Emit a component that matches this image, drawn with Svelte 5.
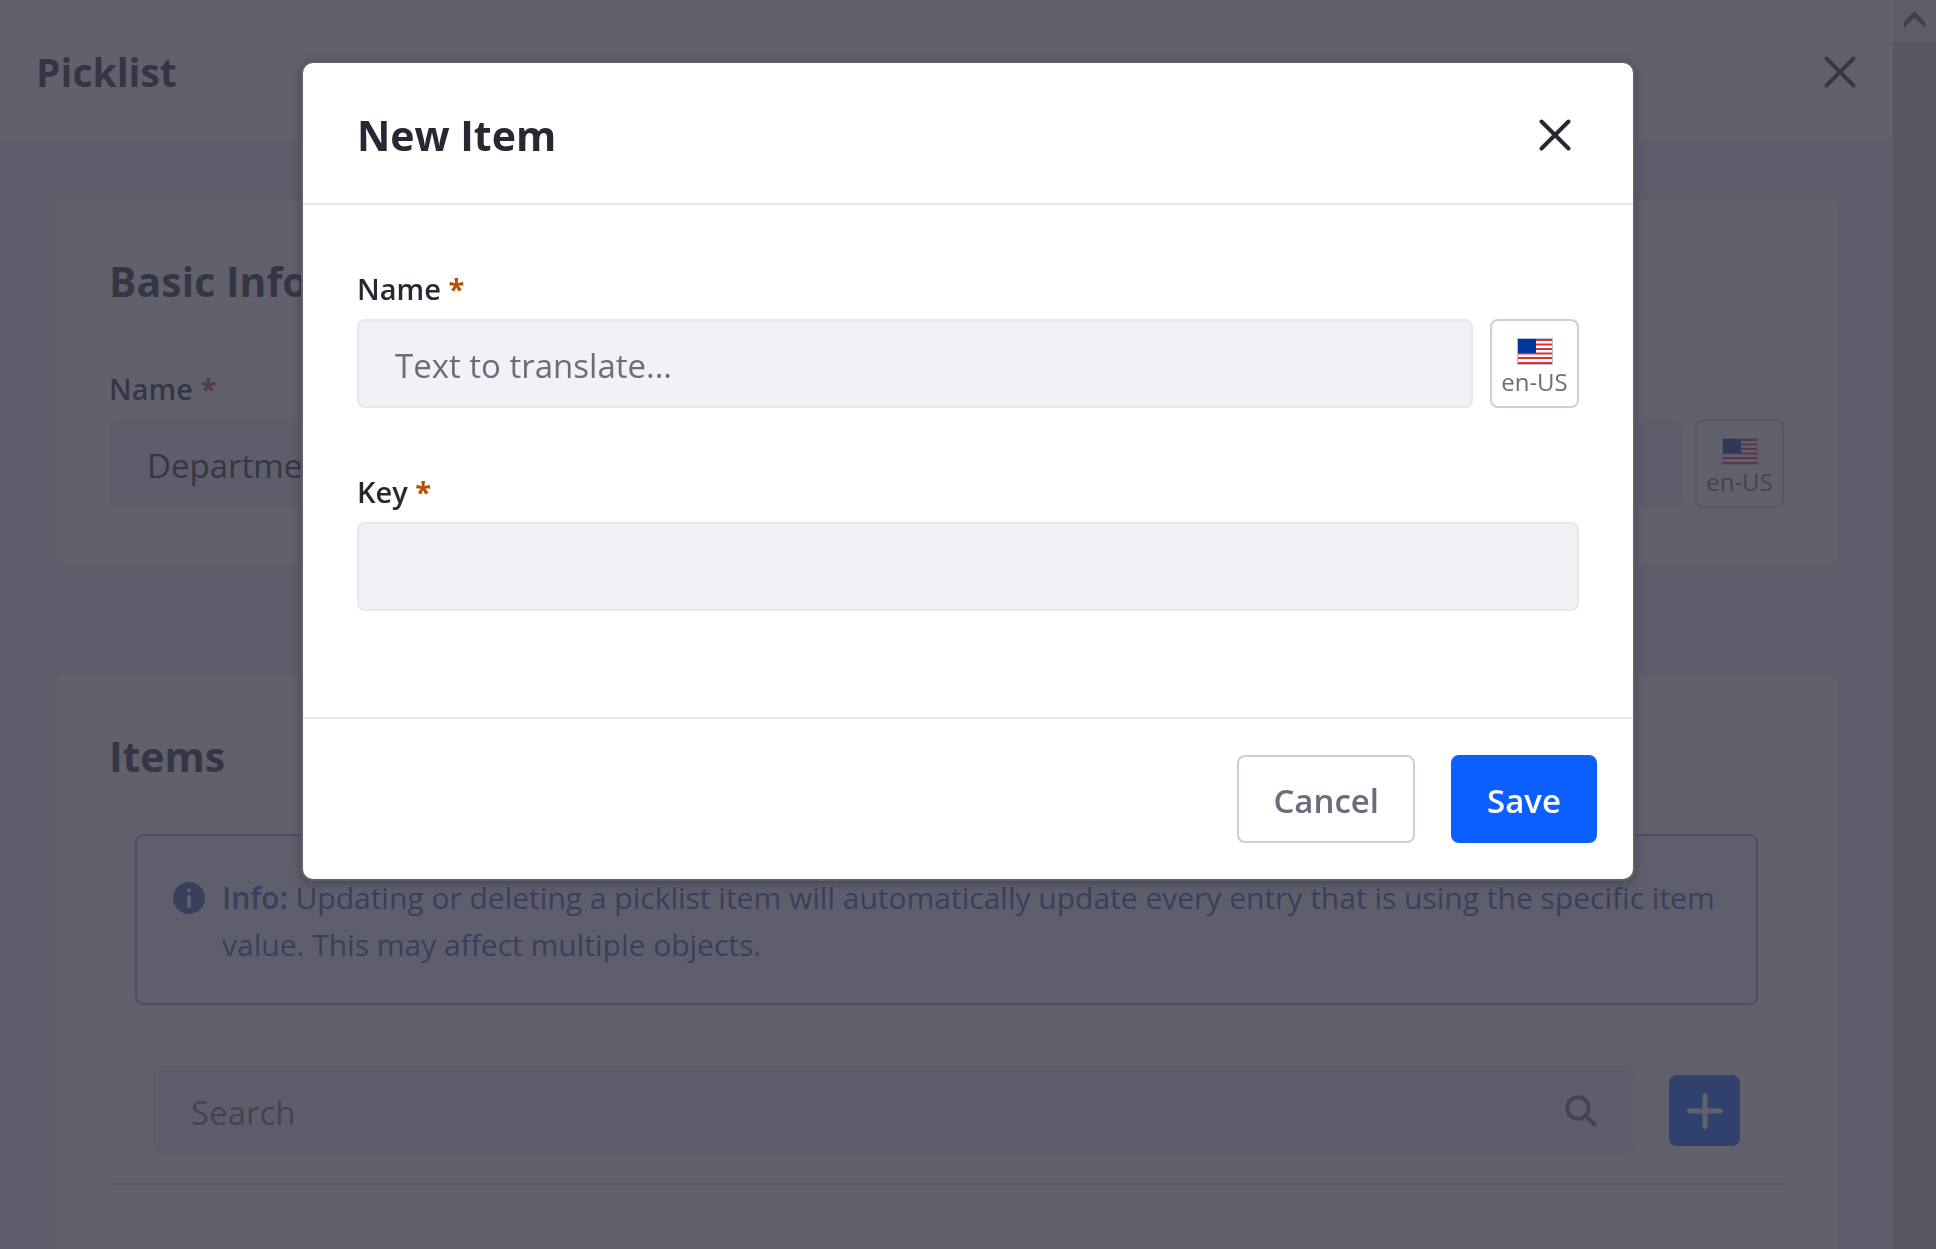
<script lang="ts">
  let name = $state('');
  let key = $state('');
  let picklistName = $state('Departments');
  let query = $state('');
</script>

{#snippet close()}
  <svg class="close-icon" viewBox="0 0 32 32" aria-hidden="true">
    <path d="M2.5 2.5 29.5 29.5M29.5 2.5 2.5 29.5" />
  </svg>
{/snippet}

{#snippet locale()}
  <button type="button" class="locale" aria-label="Language: en-US">
    <svg class="flag" viewBox="0 0 36 27" aria-hidden="true">
      <rect width="36" height="27" fill="#b9c3cf" />
      <rect x="1" y="1" width="34" height="25" fill="#fff" />
      <path
        d="M1 2h34M1 6.5h34M1 11h34M1 15.5h34M1 20h34M1 25h34"
        stroke="#e02f33"
        stroke-width="2"
      />
      <rect x="1" y="1" width="18" height="14" fill="#0035a0" />
    </svg>
    <span>en-US</span>
  </button>
{/snippet}

<div class="page">
  <main class="panel">
    <header class="panel-head">
      <h1>Picklist</h1>
      <button type="button" class="icon-button" aria-label="Close panel">{@render close()}</button>
    </header>

    <div class="cards">
      <section class="card">
        <h2>Basic Info</h2>
        <label for="picklist-name">Name <span class="req">*</span></label>
        <div class="row">
          <input id="picklist-name" type="text" bind:value={picklistName} />
          {@render locale()}
        </div>
      </section>

      <section class="card items">
        <h2>Items</h2>
        <div class="alert">
          <svg class="info-icon" viewBox="0 0 32 32" aria-hidden="true">
            <circle cx="16" cy="16" r="16" fill="#2e5aac" />
            <circle cx="16" cy="8" r="2" fill="#eef2fa" />
            <path d="M16 15v9" stroke="#eef2fa" stroke-width="4" stroke-linecap="round" />
          </svg>
          <p>
            <strong>Info:</strong> Updating or deleting a picklist item will automatically update every
            entry that is using the specific item value. This may affect multiple objects.
          </p>
        </div>
        <div class="toolbar">
          <div class="search">
            <input type="search" aria-label="Search" placeholder="Search" bind:value={query} />
            <svg viewBox="0 0 32 32" aria-hidden="true">
              <circle cx="13" cy="13" r="10.7" />
              <path d="m21 21 8.500 8.500" />
            </svg>
          </div>
          <button type="button" class="add" aria-label="Add item">
            <svg viewBox="0 0 36 36" aria-hidden="true"><path d="M18 2.500v31M2.500 18h31" /></svg>
          </button>
        </div>
      </section>
    </div>
  </main>

  <div class="scrollbar" aria-hidden="true">
    <div class="scroll-up">
      <svg viewBox="0 0 21 17"><path d="M0 10.500 10.500 0 21 10.500V17L10.500 7 0 17z" /></svg>
    </div>
  </div>
</div>

<div class="backdrop">
  <div class="modal" role="dialog" aria-modal="true" aria-labelledby="modal-title">
    <header class="modal-head">
      <h2 id="modal-title">New Item</h2>
      <button type="button" class="icon-button" aria-label="Close dialog">{@render close()}</button>
    </header>
    <form class="modal-body" id="item-form">
      <div class="field">
        <label for="item-name">Name <span class="req">*</span></label>
        <div class="row wide">
          <input id="item-name" type="text" placeholder="Text to translate..." bind:value={name} />
          {@render locale()}
        </div>
      </div>
      <div class="field">
        <label for="item-key">Key <span class="req">*</span></label>
        <input id="item-key" type="text" bind:value={key} />
      </div>
    </form>
    <footer class="modal-foot">
      <button type="button" class="btn secondary">Cancel</button>
      <button type="submit" form="item-form" class="btn primary">Save</button>
    </footer>
  </div>
</div>

<style>
  :global(body) {
    margin: 0;
    background: #f1ebf2;
    color: #272833;
    font-family: 'Open Sans', 'Noto Sans', sans-serif;
    font-size: 33px;
  }
  .page,
  .page *,
  .backdrop,
  .backdrop * {
    box-sizing: border-box;
  }
  h1,
  h2,
  p {
    margin: 0;
  }
  h1,
  h2 {
    font-size: 41px;
    line-height: 56px;
    font-weight: 700;
  }
  h1 {
    font-size: 39px;
  }
  button,
  input {
    font: inherit;
    color: inherit;
  }
  button {
    padding: 0;
    cursor: pointer;
  }

  .page {
    display: flex;
    height: 100vh;
    overflow: hidden;
  }
  .panel {
    flex: 1;
    min-width: 0;
    display: flex;
    flex-direction: column;
  }
  .panel-head {
    display: flex;
    flex: none;
    align-items: center;
    justify-content: space-between;
    padding: 44px 35px 40px 36px;
    background: #fff;
    border-bottom: 2px solid #e7e7ed;
  }
  .cards {
    flex: 1;
    display: flex;
    flex-direction: column;
    gap: 107px;
    padding: 56px 54px 0;
  }
  .card {
    padding: 53px 53px 56px;
    background: #fff;
    border: 2px solid #ede7ee;
    border-radius: 8px;
  }
  .items {
    flex: 1;
    padding-bottom: 0;
    border-bottom: 0;
    border-radius: 8px 8px 0 0;
  }
  .icon-button {
    display: grid;
    place-items: center;
    width: 36px;
    height: 36px;
    border: 0;
    background: none;
  }
  .close-icon {
    width: 32px;
    height: 32px;
    fill: none;
    stroke: currentColor;
    stroke-width: 4;
    stroke-linecap: round;
  }

  label {
    display: block;
    font-size: 29px;
    line-height: 44px;
    font-weight: 600;
    margin-bottom: 8px;
  }
  .card label {
    margin-top: 58px;
  }
  .req {
    color: #b95000;
    font-weight: 700;
  }
  .row {
    display: flex;
    gap: 13px;
  }
  .row.wide {
    gap: 17px;
  }
  input {
    flex: 1;
    display: block;
    width: 100%;
    min-width: 0;
    height: 89px;
    padding: 4px 36px 0;
    background: #f1f2f5;
    border: 2px solid #e7e7ed;
    border-radius: 8px;
    outline: 0;
  }
  .card input {
    background: #f1ebf2;
    border-color: #ede7ee;
  }
  input::placeholder {
    color: #6b6c7e;
    opacity: 1;
  }
  .locale {
    flex: none;
    width: 89px;
    height: 89px;
    display: flex;
    flex-direction: column;
    align-items: center;
    gap: 1px;
    padding-top: 17px;
    background: #fff;
    border: 2px solid #cdced9;
    border-radius: 8px;
    color: #6b6c7e;
    font-size: 24px;
    line-height: 32px;
  }
  .flag {
    flex: none;
    width: 36px;
    height: 27px;
  }

  .alert {
    display: flex;
    gap: 17px;
    margin: 50px 26px 0;
    padding: 38px 24px 35px 36px;
    background: #f4eef4;
    border: 2px solid #89a7e0;
    border-radius: 8px;
    color: #2e5aac;
    font-size: 30px;
    line-height: 47px;
  }
  .info-icon {
    flex: none;
    width: 32px;
    height: 32px;
    margin-top: 8px;
  }
  strong {
    font-weight: 600;
  }
  .toolbar {
    display: flex;
    align-items: center;
    gap: 36px;
    padding: 61px 44px 28px;
    border-bottom: 2px solid #e7e7ed;
  }
  .search {
    flex: 1;
    display: flex;
    align-items: center;
    padding-right: 34px;
    background: #f1ebf2;
    border: 2px solid #ede7ee;
    border-radius: 8px;
  }
  .search input {
    height: 85px;
    background: none;
    border: 0;
  }
  .search svg {
    flex: none;
    width: 32px;
    height: 32px;
    fill: none;
    stroke: #6b6c7e;
    stroke-width: 4;
    stroke-linecap: round;
  }
  .add {
    display: grid;
    place-items: center;
    width: 71px;
    height: 71px;
    background: #0b5fff;
    border: 0;
    border-radius: 8px;
  }
  .add svg {
    width: 36px;
    height: 36px;
    stroke: #fff;
    stroke-width: 5;
    stroke-linecap: round;
  }

  .scrollbar {
    width: 43px;
    background: #cdcdcd;
  }
  .scroll-up {
    display: grid;
    place-items: center;
    height: 42px;
    padding-bottom: 4px;
    background: #f0f0f0;
  }
  .scroll-up svg {
    width: 21px;
    height: 17px;
    fill: #606060;
  }

  .backdrop {
    position: fixed;
    inset: 0;
    padding: 63px 36px;
    background: rgba(57, 58, 74, 0.8);
  }
  .modal {
    max-width: 1330px;
    margin: 0 auto;
    background: #fff;
    border-radius: 10px;
    box-shadow:
      0 0 0 2px #60606c,
      0 2px 10px 2px rgba(39, 40, 51, 0.5);
  }
  .modal-head {
    display: flex;
    align-items: center;
    justify-content: space-between;
    padding: 44px 60px 40px 54px;
    border-bottom: 2px solid #e7e7ed;
  }
  .modal-body {
    display: flex;
    flex-direction: column;
    gap: 62px;
    padding: 62px 54px 106px;
  }
  .modal-foot {
    display: flex;
    justify-content: flex-end;
    gap: 36px;
    padding: 36px;
    border-top: 2px solid #e7e7ed;
  }
  .btn {
    height: 88px;
    padding: 2px 34px 0;
    border: 2px solid #cdced9;
    border-radius: 8px;
    font-weight: 600;
  }
  .secondary {
    background: #fff;
    color: #6b6c7e;
  }
  .primary {
    background: #0b5fff;
    border-color: #0b5fff;
    color: #fff;
  }
</style>
